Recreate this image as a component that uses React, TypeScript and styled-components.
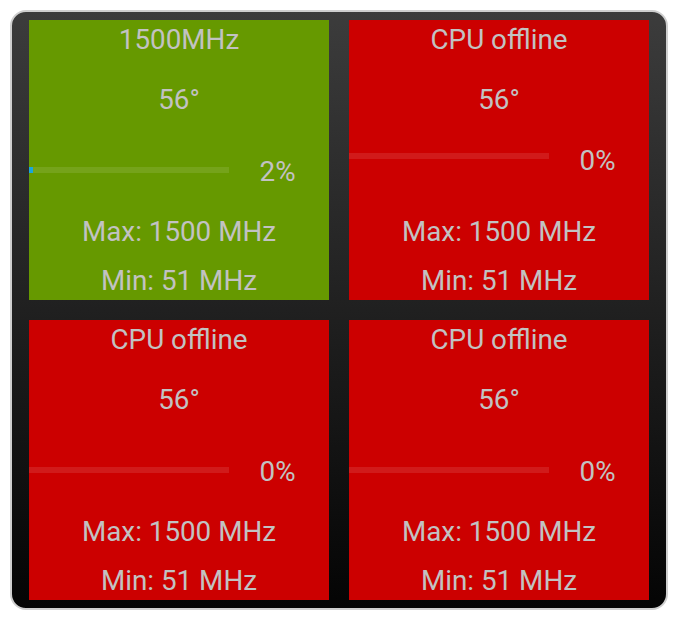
import React from "react";
import styled, { createGlobalStyle } from "styled-components";

const Global = createGlobalStyle`
  html, body { margin: 0; padding: 0; background: #ffffff; }
  body { font-family: Roboto, "Noto Sans", "Liberation Sans", sans-serif; }
`;

const Page = styled.div`
  padding: 10px 0 0 10px;
`;

const Frame = styled.div`
  box-sizing: border-box;
  width: 658px;
  height: 600px;
  border: 2px solid #cfcfcf;
  border-radius: 16px;
  background: linear-gradient(to bottom, #3c3c3c 0%, #202020 50%, #040404 100%);
  padding: 8px 17px;
  display: grid;
  grid-template-columns: 300px 300px;
  grid-template-rows: 280px 280px;
  column-gap: 20px;
  row-gap: 20px;
`;

const Cell = styled.div<{ $online: boolean }>`
  background: ${(p) => (p.$online ? "#669900" : "#cc0000")};
  display: flex;
  flex-direction: column;
  color: #c2c2c2;
  font-size: 27.8px;
  overflow: hidden;
`;

const Line = styled.div<{ $top: number }>`
  margin-top: ${(p) => p.$top}px;
  height: 40px;
  line-height: 40px;
  text-align: center;
  white-space: nowrap;
`;

const BarRow = styled.div<{ $top: number }>`
  margin-top: ${(p) => p.$top}px;
  height: 40px;
  display: flex;
  align-items: center;
`;

const Track = styled.div`
  width: 200px;
  height: 6px;
  background: rgba(255, 255, 255, 0.1);
  display: flex;
`;

const Fill = styled.div`
  height: 100%;
  background: #1aa6dc;
`;

const Percent = styled.div<{ $shift: number }>`
  flex: 1;
  text-align: center;
  line-height: 40px;
  padding-top: ${(p) => p.$shift}px;
  padding-right: 3px;
`;

type CpuProps = {
  title: string;
  online: boolean;
  load: number;
  compact?: boolean;
};

const CpuCell = ({ title, online, load, compact }: CpuProps) => (
  <Cell $online={online}>
    <Line $top={0}>{title}</Line>
    <Line $top={20}>56°</Line>
    <BarRow $top={compact ? 16 : 30}>
      <Track>
        {load > 0 && <Fill style={{ width: `${load * 2}px` }} />}
      </Track>
      <Percent $shift={compact ? 10 : 4}>{load}%</Percent>
    </BarRow>
    <Line $top={compact ? 36 : 22}>Max: 1500 MHz</Line>
    <Line $top={9}>Min: 51 MHz</Line>
  </Cell>
);

export default function App() {
  return (
    <>
      <Global />
      <Page>
        <Frame>
          <CpuCell title="1500MHz" online load={2} />
          <CpuCell title="CPU offline" online={false} load={0} compact />
          <CpuCell title="CPU offline" online={false} load={0} />
          <CpuCell title="CPU offline" online={false} load={0} />
        </Frame>
      </Page>
    </>
  );
}
